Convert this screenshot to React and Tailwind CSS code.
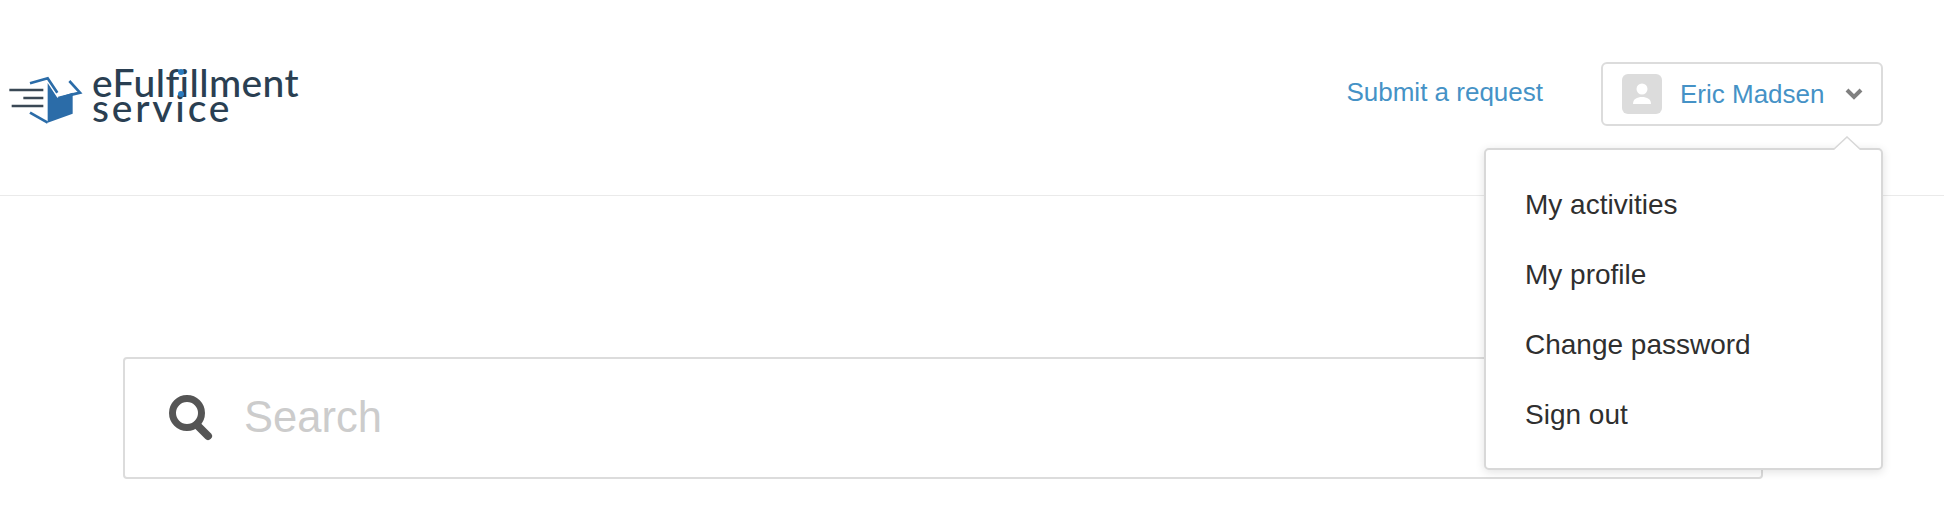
import React from 'react';

const menuItems = ['My activities', 'My profile', 'Change password', 'Sign out'];

const Logo = () => (
  <div className="flex items-start">
    <svg width="90" height="60" viewBox="0 60 270 180" className="mt-[71px] shrink-0">
      <g stroke="#3a4855" strokeWidth="7" fill="none">
        <path d="M28 117H130M70 141H130M35 165H130" />
      </g>
      <path d="M143 96L172 140L218 125V188L143 215Z" fill="#2b6ca8" />
      <g stroke="#2b6ca8" strokeWidth="8" fill="none">
        <path d="M90 97L143 82L172 125" />
        <path d="M208 90L240 125L175 141" />
        <path d="M90 185L143 215" />
      </g>
    </svg>
    <div className="relative ml-[2px] mt-[70px] font-['Lato',sans-serif] font-medium text-[#2a3f52]">
      <div className="text-[39px] leading-[25px] tracking-[0.4px]">eFulfillment</div>
      <div className="text-[39px] leading-[25px] tracking-[2.8px]">service</div>
      {/* blue dots on the i */}
      <span className="absolute left-[86px] top-[-1px] w-[6px] h-[6px] rounded-full bg-[#2b7cc0]" />
      <span className="absolute left-[86px] top-[21px] w-[6px] h-[6px] rounded-full bg-[#2b7cc0]" />
    </div>
  </div>
);

const SearchIcon = () => (
  <svg width="44" height="48" viewBox="0 0 44 48" className="shrink-0">
    <circle cx="18" cy="19" r="14.5" stroke="#555" strokeWidth="7" fill="none" />
    <path d="M28 31L39 42" stroke="#555" strokeWidth="8" strokeLinecap="round" />
  </svg>
);

const App = () => {
  return (
    <div className="w-[1944px] h-[518px] bg-white overflow-hidden font-['Liberation_Sans',Arial,sans-serif]">
      <header className="relative h-[196px] border-b border-[#eaeaea] flex justify-between items-start pr-[61px]">
        <Logo />
        <div className="flex items-start gap-[58px] mt-[62px]">
          <a className="mt-[13px] text-[26px] leading-[34px] text-[#4592c6]">Submit a request</a>
          <div className="w-[282px] h-[64px] border-2 border-[#dcdcdc] rounded-[6px] flex items-center pl-[19px]">
            <div className="w-[40px] h-[40px] rounded-[6px] bg-[#dcdcdc] flex items-center justify-center">
              <svg width="22" height="24" viewBox="0 0 22 24" fill="#fff">
                <circle cx="11" cy="7" r="5.5" />
                <path d="M2 22C2 17 6 15 11 15C16 15 20 17 20 22Z" />
              </svg>
            </div>
            <span className="ml-[18px] text-[26px] leading-[34px] text-[#4592c6]">Eric Madsen</span>
            <svg width="18" height="12" viewBox="0 0 18 12" className="ml-[20px]">
              <path d="M2 2L9 9L16 2" stroke="#808080" strokeWidth="4" fill="none" />
            </svg>
          </div>
        </div>

        <div className="absolute z-10 top-[148px] right-[61px] w-[399px] h-[322px] bg-white border-2 border-[#d8d8d8] rounded-[5px] shadow-[0_2px_10px_rgba(0,0,0,0.12)] pt-[20px] pl-[39px]">
          <svg width="28" height="14" viewBox="0 0 28 14" className="absolute -top-[14px] right-[20px]">
            <path d="M0 14L14 1L28 14" fill="#fff" stroke="#d8d8d8" strokeWidth="1.5" />
          </svg>
          {menuItems.map((item) => (
            <div key={item} className="h-[70px] flex items-center text-[28px] text-[#2f2f2f]">
              {item}
            </div>
          ))}
        </div>
      </header>

      <div className="mt-[161px] ml-[123px] w-[1640px] h-[122px] border-2 border-[#dcdcdc] rounded-[4px] flex items-center pl-[44px]">
        <SearchIcon />
        <span className="ml-[31px] text-[43.5px] leading-none text-[#cccccc]">Search</span>
      </div>
    </div>
  );
};

export default App;
